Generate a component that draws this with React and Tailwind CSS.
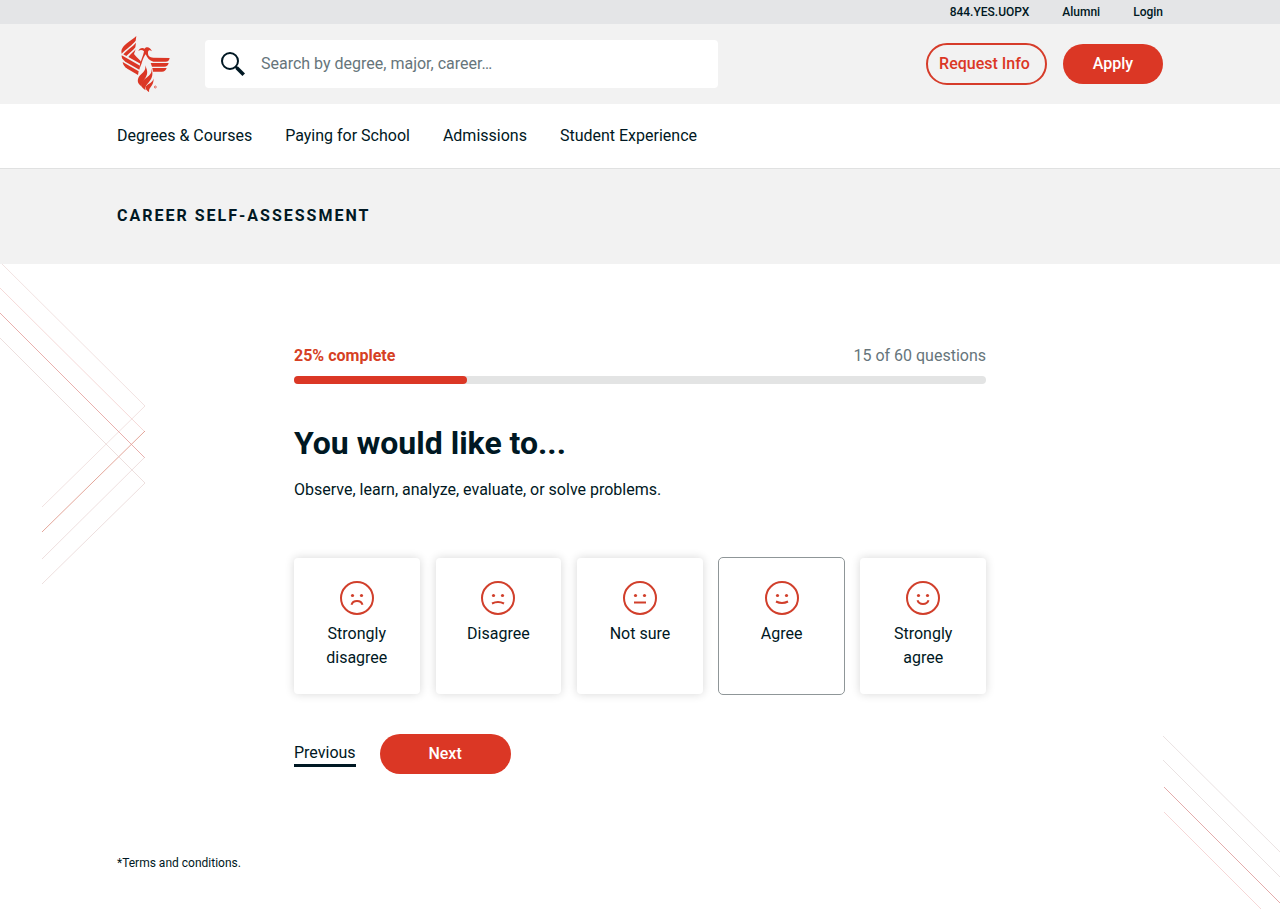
import React, { useState } from "react";

const NAV = ["Degrees & Courses", "Paying for School", "Admissions", "Student Experience"];

const OPTIONS = [
  { id: "strongly-disagree", label: "Strongly disagree", mouth: "M12.5 24.8 C14 19.8 22 19.8 23.5 24.8" },
  { id: "disagree", label: "Disagree", mouth: "M12 23.5 Q18 20.5 24 23.5" },
  { id: "not-sure", label: "Not sure", mouth: "M12 22.5 H24" },
  { id: "agree", label: "Agree", mouth: "M12 21.5 Q18 24.5 24 21.5" },
  { id: "strongly-agree", label: "Strongly agree", mouth: "M12.5 20.2 C14 25.2 22 25.2 23.5 20.2" },
];

function PhoenixLogo() {
  return (
    <svg viewBox="15 18 168 168" className="size-14" fill="#db3725" aria-hidden="true">
      <path d="M73 18 C58 32 37 42 31 55 C27 62 28 66 29 71 C42 57 62 44 71 32Z" />
      <path d="M72 38 C62 51 44 60 34 73 L43 78 C54 67 65 61 70 52Z" />
      <path d="M71 58 C66 65 56 71 49 81 L88 103 L86 93 C78 84 70 78 66 72Z" />
      <path d="M29 76 L84 107 L82 119 L40 95 C32 89 28 84 29 76Z" />
      <path d="M32 96 L80 124 L78 135 L46 116 C37 110 33 104 32 96Z" />
      <path d="M79 63 C82 54 91 52 98 56 C103 49 114 50 120 64 C114 59 109 60 108 66 C107 77 113 83 124 83 L173 84 C172 91 168 95 161 95 L124 95 C112 92 106 84 101 73 C93 82 91 98 82 118 C83 96 95 76 96 64 C91 59 85 58 79 63Z" />
      <path d="M116 99 L170 99 C168 107 164 110 157 110 L120 110Z" />
      <path d="M121 114 L164 114 C161 122 157 125 150 125 L123 125Z" />
      <path d="M99 106 C105 123 87 130 80 142 C74 154 79 164 90 170 C84 149 120 143 99 106Z" />
      <path d="M117 112 C127 138 92 145 88 159 C86 169 92 175 101 181 C94 160 134 153 117 112Z" />
      <path d="M123 140 C129 156 108 160 102 169 C99 177 104 182 112 187 C106 173 131 166 123 140Z" />
      <circle cx="130" cy="171" r="3" fill="none" stroke="#db3725" strokeWidth="2" />
    </svg>
  );
}

function SearchIcon() {
  return (
    <svg viewBox="0 0 24 24" className="size-6 shrink-0" fill="none" stroke="#001823" aria-hidden="true">
      <circle cx="9" cy="9" r="8" strokeWidth="2" />
      <path d="M14.5 14.5 L17.5 17.5" strokeWidth="2" />
      <path d="M15.5 15.5 L22.7 22.7" strokeWidth="3.6" />
    </svg>
  );
}

function Face({ mouth }) {
  return (
    <svg viewBox="0 0 36 36" className="size-9" fill="none" stroke="#d13f2b" aria-hidden="true">
      <circle cx="18" cy="18" r="16" strokeWidth="2" />
      <circle cx="13.5" cy="15.5" r="1.6" fill="#d13f2b" stroke="none" />
      <circle cx="22.5" cy="15.5" r="1.6" fill="#d13f2b" stroke="none" />
      <path d={mouth} strokeWidth="2" />
    </svg>
  );
}

function LeftLines() {
  return (
    <svg
      viewBox="0 0 146 322"
      className="pointer-events-none absolute left-0 top-0 h-[322px] w-[146px]"
      fill="none"
      strokeWidth="0.6"
      aria-hidden="true"
    >
      <path d="M0 -2 L145 142 L42 243" stroke="#e8cfcd" />
      <path d="M0 24 L145 168" stroke="#eebfbd" />
      <path d="M145 167 L42 268" stroke="#dc8f80" strokeWidth="0.8" />
      <path d="M0 49 L145 194" stroke="#e39a98" strokeWidth="0.8" />
      <path d="M145 193 L42 295" stroke="#e3c9c9" />
      <path d="M0 74 L145 219 L42 320" stroke="#e0cac8" />
    </svg>
  );
}

function RightLines() {
  return (
    <svg
      viewBox="0 0 117 173"
      className="pointer-events-none absolute bottom-0 right-0 h-[173px] w-[117px]"
      fill="none"
      strokeWidth="0.6"
      aria-hidden="true"
    >
      <path d="M0 0 L117 116" stroke="#dccfcf" />
      <path d="M0 24 L117 141" stroke="#dccfcf" />
      <path d="M1 51 L117 167" stroke="#dc9696" strokeWidth="0.8" />
      <path d="M1 76 L98 173" stroke="#f0bcbc" />
    </svg>
  );
}

export default function App() {
  const [answer, setAnswer] = useState("agree");

  return (
    <div className="flex min-h-screen flex-col bg-white font-['Roboto',sans-serif] text-base text-[#001823]">
      <header>
        <div className="bg-[#e4e5e7]">
          <div className="mx-auto flex h-6 max-w-[1046px] items-center justify-end gap-[33px] text-xs font-medium">
            <a href="#phone">844.YES.UOPX</a>
            <a href="#alumni">Alumni</a>
            <a href="#login">Login</a>
          </div>
        </div>
        <div className="bg-[#f2f2f2]">
          <div className="mx-auto flex h-20 max-w-[1046px] items-center">
            <a href="#home" aria-label="University of Phoenix" className="mr-8 shrink-0">
              <PhoenixLogo />
            </a>
            <label className="flex h-12 w-full max-w-[513px] items-center gap-4 rounded bg-white px-4">
              <SearchIcon />
              <input
                type="search"
                aria-label="Search"
                placeholder="Search by degree, major, career…"
                className="min-w-0 flex-1 bg-transparent outline-none placeholder:text-[#66757b]"
              />
            </label>
            <div className="ml-auto flex shrink-0 items-center gap-4 font-medium">
              <button type="button" className="h-[42px] w-[121px] rounded-full border-2 border-[#d63c2a] pr-1 text-[#db3725]">
                Request Info
              </button>
              <button type="button" className="h-10 w-[100px] rounded-full bg-[#db3725] text-white">
                Apply
              </button>
            </div>
          </div>
        </div>
        <nav className="border-b border-[#e0e1e1]">
          <div className="mx-auto flex h-16 max-w-[1046px] items-center gap-[33px]">
            {NAV.map((item) => (
              <a key={item} href="#nav">
                {item}
              </a>
            ))}
          </div>
        </nav>
        <div className="bg-[#f2f2f2]">
          <div className="mx-auto h-[95px] max-w-[1046px] pt-[35px]">
            <p className="text-base font-bold uppercase leading-6 tracking-[2px]">Career Self-Assessment</p>
          </div>
        </div>
      </header>

      <main className="relative flex-1 overflow-hidden pb-9">
        <LeftLines />
        <RightLines />
        <form className="mx-auto max-w-[692px] pt-20" onSubmit={(e) => e.preventDefault()}>
          <div className="flex justify-between leading-6">
            <span className="font-bold text-[#d63f24]">25% complete</span>
            <span className="text-[#66757b]">15 of 60 questions</span>
          </div>
          <div
            role="progressbar"
            aria-label="Progress"
            aria-valuenow={25}
            aria-valuemin={0}
            aria-valuemax={100}
            className="mt-2 h-2 rounded-full bg-[#e3e4e4]"
          >
            <div className="h-2 w-1/4 rounded-full bg-[#db3725]" />
          </div>
          <h1 className="mt-10 text-[32px] font-bold leading-[38px]">You would like to...</h1>
          <p className="mt-4 leading-6">Observe, learn, analyze, evaluate, or solve problems.</p>

          <div role="radiogroup" aria-label="Your answer" className="mt-14 grid grid-cols-5 gap-4">
            {OPTIONS.map(({ id, label, mouth }) => (
              <label
                key={id}
                className="relative flex h-[136px] cursor-pointer flex-col items-center rounded bg-white px-6 pt-[22px] text-center leading-6 shadow-[0_0_10px_rgba(0,0,0,0.16)] has-checked:shadow-none has-checked:outline has-checked:outline-[#8f9698]"
              >
                <input
                  type="radio"
                  name="answer"
                  value={id}
                  checked={answer === id}
                  onChange={() => setAnswer(id)}
                  className="sr-only"
                />
                <Face mouth={mouth} />
                <span className="mt-1.5">{label}</span>
              </label>
            ))}
          </div>

          <div className="mt-10 flex h-10 items-center gap-6">
            <button type="button" className="border-b-3 border-[#001823] leading-[22px]">
              Previous
            </button>
            <button type="submit" className="h-10 w-[131px] rounded-full bg-[#db3725] font-medium text-white">
              Next
            </button>
          </div>
        </form>
        <p className="mx-auto mt-20 max-w-[1046px] text-xs leading-[18px]">
          <a href="#terms">*Terms and conditions.</a>
        </p>
      </main>
    </div>
  );
}
